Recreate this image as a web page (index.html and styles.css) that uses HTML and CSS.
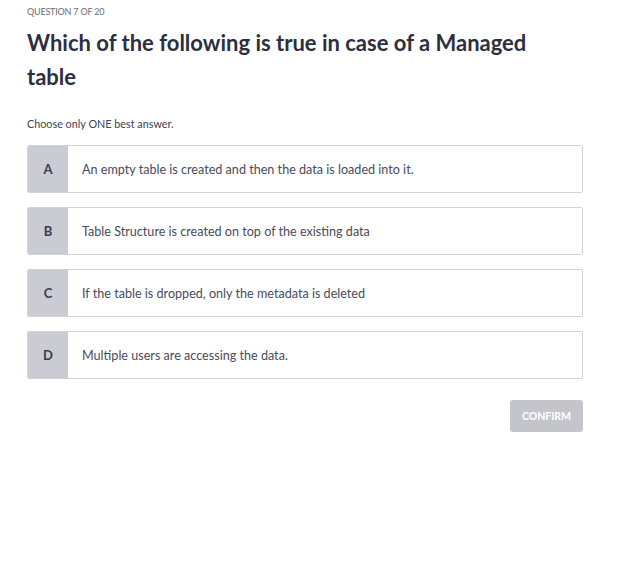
FILE: index.html
```html
<!DOCTYPE html>
<html>
<head>
<meta charset="utf-8">
<link rel="stylesheet" href="styles.css">
</head>
<body>
<div class="quiz">
  <div class="counter">QUESTION 7 OF 20</div>
  <h1 class="question">Which of the following is true in case of a Managed table</h1>
  <div class="hint">Choose only ONE best answer.</div>
  <div class="options">
    <div class="option"><div class="letter">A</div><div class="text">An empty table is created and then the data is loaded into it.</div></div>
    <div class="option"><div class="letter">B</div><div class="text">Table Structure is created on top of the existing data</div></div>
    <div class="option"><div class="letter">C</div><div class="text">If the table is dropped, only the metadata is deleted</div></div>
    <div class="option"><div class="letter">D</div><div class="text">Multiple users are accessing the data.</div></div>
  </div>
  <div class="actions"><button class="confirm">CONFIRM</button></div>
</div>
</body>
</html>
```
FILE: styles.css
```css
html, body { margin: 0; padding: 0; background: #fff; }
body { font-family: "Lato", "Open Sans", sans-serif; color: #2d2f3e; }
.quiz { width: 556px; padding: 6px 0 0 27px; }
.counter { font-size: 9px; color: #6b6d78; line-height: 12px; letter-spacing: -0.2px; }
.question { margin: 8px 0 0; max-width: 540px; font-size: 22px; font-weight: 700; line-height: 34px; color: #2d2f3e; }
.hint { margin-top: 23px; font-size: 10.8px; color: #3f4150; line-height: 14px; }
.options { margin-top: 14px; display: flex; flex-direction: column; gap: 14px; }
.option { display: flex; height: 48px; box-sizing: border-box; border: 1px solid #d2d3d8; border-radius: 2px; overflow: hidden; }
.letter { width: 40px; flex: none; background: #cacbd3; display: flex; align-items: center; justify-content: center; font-size: 13px; font-weight: 700; color: #3a3c4b; }
.text { display: flex; align-items: center; padding-left: 14px; font-size: 12.6px; color: #494b5a; }
.actions { display: flex; justify-content: flex-end; margin-top: 21px; }
.confirm { width: 73px; height: 32px; border: none; border-radius: 3px; background: #c4c5cb; color: #fff; font-family: inherit; font-size: 10.5px; font-weight: 700; padding: 0; }
```
